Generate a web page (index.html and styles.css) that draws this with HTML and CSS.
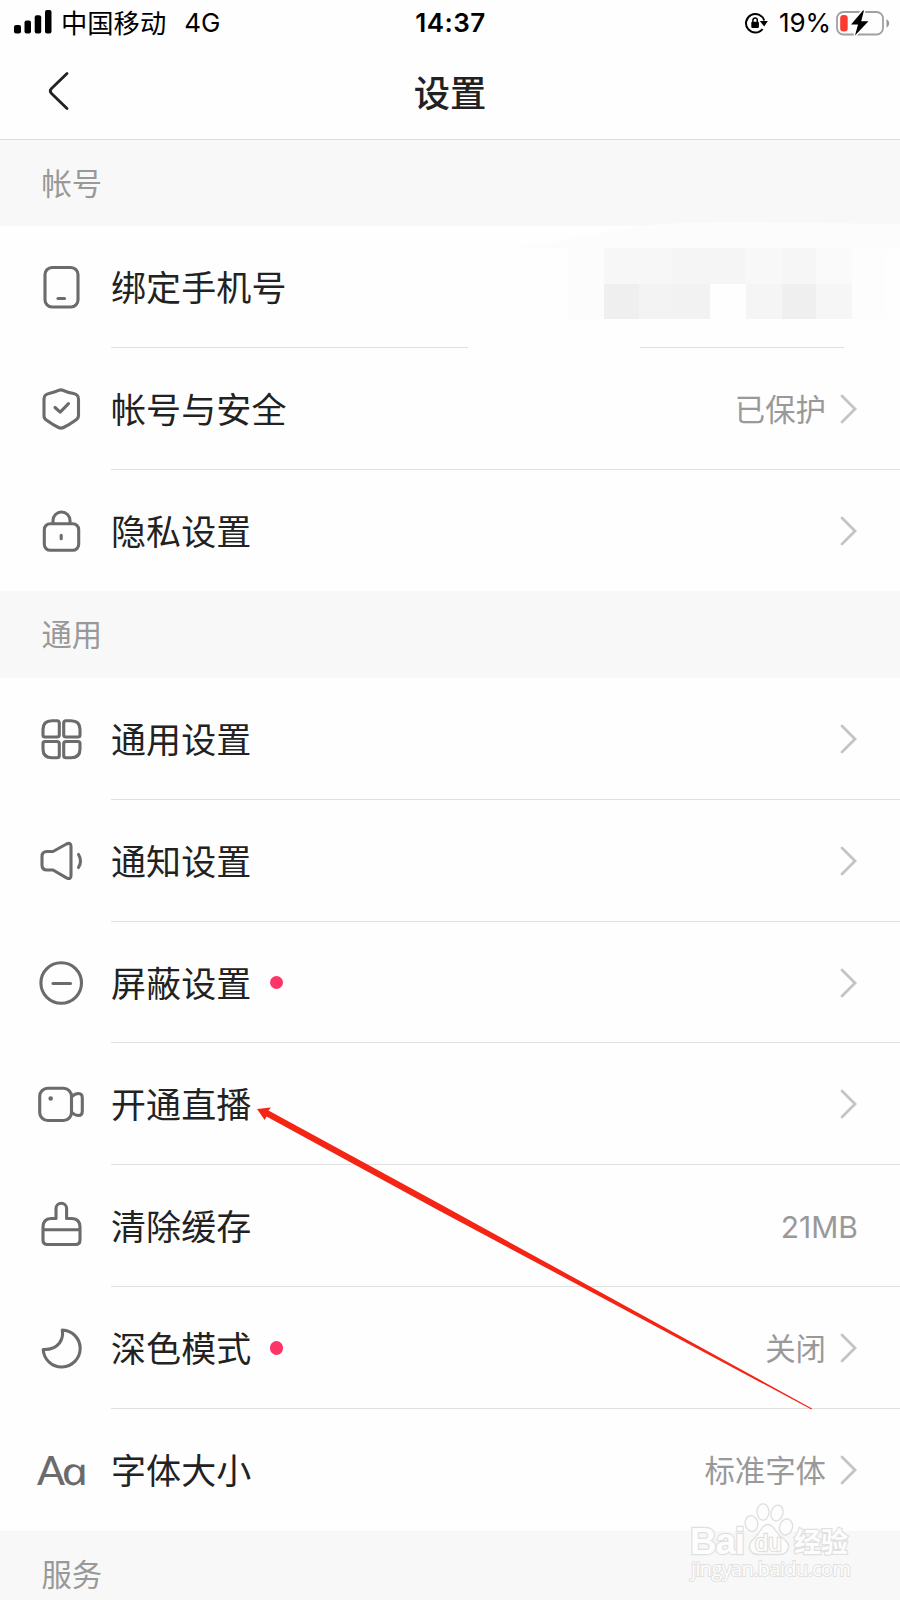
FILE: index.html
```html
<!DOCTYPE html>
<html lang="zh-CN">
<head>
<meta charset="utf-8">
<title>设置</title>
<link rel="stylesheet" href="styles.css">
</head>
<body>
<div class="screen">
  <header class="status">
    <div class="status-left">
      <svg class="signal" width="38" height="24" viewBox="0 0 38 24"><rect x="0" y="15" width="7" height="8.5" rx="2"/><rect x="10.5" y="10.5" width="6.5" height="13" rx="2"/><rect x="20.7" y="5.3" width="6.5" height="18.2" rx="2"/><rect x="31" y="0" width="6.5" height="23.5" rx="2"/></svg>
      <span class="carrier">中国移动</span>
      <span class="network">4G</span>
    </div>
    <span class="clock">14:37</span>
    <div class="status-right">
      <svg class="rotation" width="24" height="24" viewBox="0 0 24 24"><path d="M18.600 18A9.300 9.300 0 1 1 20.200 9.500" fill="none" stroke="#000" stroke-width="2"/><path d="M15.800 10H23.800L20.200 15.500Z"/><rect x="7.300" y="10.700" width="7.600" height="6.200" rx="1"/><path d="M8.900 11V9.200a2.200 2.200 0 0 1 4.400 0V11" fill="none" stroke="#000" stroke-width="1.500"/></svg>
      <span class="percent">19%</span>
      <svg class="battery" width="54" height="28" viewBox="0 0 54 28"><rect x="1" y="3" width="46" height="22.500" rx="6.500" fill="none" stroke="#a0a0a0" stroke-width="1.800"/><path d="M50.500 10.200c3.600 1.500 3.600 6.600 0 8.200Z" fill="#999"/><rect x="4.200" y="6" width="7.500" height="16.500" rx="3.300" fill="#fa3b30"/><path d="M27 1.500L15 15.500H22L19 26.500L32.500 12.300H25.200L28 1.500Z" stroke="#fff" stroke-width="3"/><path d="M27 1.500L15 15.500H22L19 26.500L32.500 12.300H25.200L28 1.500Z"/></svg>
    </div>
  </header>
  <nav class="nav">
    <svg class="back" width="24" height="42" viewBox="0 0 24 42"><path d="M20 3.500L4.500 18.500Q2 21 4.500 23.500L20 38.500" fill="none" stroke="#222" stroke-width="2.800" stroke-linecap="round"/></svg>
    <h1 class="title">设置</h1>
  </nav>
  <main>
    <h2 class="section">帐号</h2>
    <div class="row">
      <svg class="icon" viewBox="0 0 60 60"><rect x="14" y="10.500" width="33" height="39.500" rx="7"/><path d="M27 41.500H33.500"/></svg>
      <div class="cell first"><span class="label">绑定手机号</span></div>
    </div>
    <div class="row">
      <svg class="icon" viewBox="0 0 60 60"><path d="M28.300 11.200Q30 10.500 31.700 11.200Q37 13.500 42.500 14.500Q47.500 15.500 47.500 20V36.500Q47.500 39.500 44.500 41.200Q38.500 45.500 32.500 48.500Q30 49.700 27.500 48.500Q21.500 45.500 16 41.500Q13 39.800 13 37V20Q13 15.500 18 14.500Q23.500 13.300 28.300 11.200Z"/><path d="M24 28.500L29.200 33.200L37.500 24.700"/></svg>
      <div class="cell"><span class="label">帐号与安全</span><span class="value">已保护</span><svg class="chevron" viewBox="0 0 18 32"><path d="M2 3L15 16L2 29"/></svg></div>
    </div>
    <div class="row">
      <svg class="icon" viewBox="0 0 60 60"><rect x="13.300" y="22.700" width="34.400" height="26.600" rx="6"/><path d="M22 22.500V19.500a8.500 8.500 0 0 1 17 0v3M30.200 34.200V37.700"/></svg>
      <div class="cell last"><span class="label">隐私设置</span><svg class="chevron" viewBox="0 0 18 32"><path d="M2 3L15 16L2 29"/></svg></div>
    </div>
    <h2 class="section">通用</h2>
    <div class="row">
      <svg class="icon" viewBox="0 0 60 60"><path d="M21 11.700H26Q28.300 11.700 28.300 14V26Q28.300 28 26 28H14Q12 28 12 26V20.500Q12 11.700 21 11.700ZM40 11.700H35Q32.700 11.700 32.700 14V26Q32.700 28 35 28H47Q49 28 49 26V20.500Q49 11.700 40 11.700ZM21 48.800H26Q28.300 48.800 28.300 46.500V34.500Q28.300 32.500 26 32.500H14Q12 32.500 12 34.500V40Q12 48.800 21 48.800ZM40 48.800H35Q32.700 48.800 32.700 46.500V34.500Q32.700 32.500 35 32.500H47Q49 32.500 49 34.500V40Q49 48.800 40 48.800Z"/></svg>
      <div class="cell"><span class="label">通用设置</span><svg class="chevron" viewBox="0 0 18 32"><path d="M2 3L15 16L2 29"/></svg></div>
    </div>
    <div class="row">
      <svg class="icon" viewBox="0 0 60 60"><path d="M22 20.500L35.500 13Q40 11 40 15.500V44.500Q40 49 35.500 46.800L22 39H16Q11 39 11 34V25.500Q11 20.500 16 20.500ZM47.500 23.500Q51.500 30 47.500 36.500"/></svg>
      <div class="cell"><span class="label">通知设置</span><svg class="chevron" viewBox="0 0 18 32"><path d="M2 3L15 16L2 29"/></svg></div>
    </div>
    <div class="row">
      <svg class="icon" viewBox="0 0 60 60"><circle cx="30.200" cy="30" r="20.300"/><path d="M22 30.500H39.500"/></svg>
      <div class="cell"><span class="label">屏蔽设置</span><i class="dot"></i><svg class="chevron" viewBox="0 0 18 32"><path d="M2 3L15 16L2 29"/></svg></div>
    </div>
    <div class="row">
      <svg class="icon" viewBox="0 0 60 60"><rect x="8.700" y="14.200" width="31.800" height="32.300" rx="8"/><path d="M41 22.500Q44 19.500 47.500 19.500Q51.300 19.500 51.300 24V37Q51.300 41.500 47.500 41.500Q44 41.500 41 38.500"/><circle class="solid" cx="19.700" cy="24.500" r="2.300"/></svg>
      <div class="cell"><span class="label">开通直播</span><svg class="chevron" viewBox="0 0 18 32"><path d="M2 3L15 16L2 29"/></svg></div>
    </div>
    <div class="row">
      <svg class="icon" viewBox="0 0 60 60"><path d="M25 22.500V12.500a5.300 5.300 0 0 1 10.600 0V22.500H41Q49 23 49 31V44Q49 48.500 44.500 48.500H16.500Q12 48.500 12 44V31Q12 23 20 22.500H25M12 33.700H49"/></svg>
      <div class="cell"><span class="label">清除缓存</span><span class="value size">21MB</span></div>
    </div>
    <div class="row">
      <svg class="icon" viewBox="0 0 60 60"><path d="M31.300 12A18.500 18.500 0 1 1 12.200 31.500Q23 32 28.500 25Q32.500 19.500 31.300 12Z"/></svg>
      <div class="cell"><span class="label">深色模式</span><i class="dot"></i><span class="value">关闭</span><svg class="chevron" viewBox="0 0 18 32"><path d="M2 3L15 16L2 29"/></svg></div>
    </div>
    <div class="row">
      <svg class="icon" viewBox="0 0 60 60"><text class="glyph-cap" x="6" y="44.500">A</text><text class="glyph-low" transform="translate(33 44.500) scale(1.230 1) skewX(12)">a</text></svg>
      <div class="cell last"><span class="label">字体大小</span><span class="value">标准字体</span><svg class="chevron" viewBox="0 0 18 32"><path d="M2 3L15 16L2 29"/></svg></div>
    </div>
    <h2 class="section">服务</h2>
  </main>
  <svg class="overlay" width="900" height="1600" viewBox="0 0 900 1600">
    <path d="M510 248.500Q580 238 650 225Q680 222 740 222L900 224V248.500Z" fill="#fcfcfc"/>
    <path d="M468 344H640V350H468ZM844 344H900V350H844Z" fill="#fefefe"/>
    <g shape-rendering="crispEdges">
      <rect x="568" y="248" width="36" height="71" fill="#fcfcfc"/>
      <rect x="604" y="248" width="68" height="36" fill="#f7f7f7"/>
      <rect x="672" y="248" width="73" height="36" fill="#f5f5f5"/>
      <rect x="745" y="248" width="37" height="36" fill="#f8f8f8"/>
      <rect x="782" y="248" width="34" height="36" fill="#f6f6f6"/>
      <rect x="816" y="248" width="36" height="36" fill="#fafafa"/>
      <rect x="604" y="284" width="35" height="35" fill="#efefef"/>
      <rect x="639" y="284" width="33" height="35" fill="#f3f3f3"/>
      <rect x="672" y="284" width="38" height="35" fill="#f2f2f2"/>
      <rect x="710" y="284" width="36" height="35" fill="#fefefe"/>
      <rect x="746" y="284" width="36" height="35" fill="#f5f5f5"/>
      <rect x="782" y="284" width="34" height="35" fill="#efefef"/>
      <rect x="816" y="284" width="36" height="35" fill="#f6f6f6"/>
      <rect x="852" y="248" width="34" height="71" fill="#fdfdfd"/>
    </g>
    <path d="M257 1109L271 1107.500L268.500 1110.500L440 1204L812 1408.500L811.500 1409.500L437 1209.500L266.500 1116.500L264.700 1120Z" fill="#f42515"/>
    <g class="watermark">
      <text class="wm-bai" x="690" y="1554" textLength="55">Bai</text>
      <ellipse cx="751.500" cy="1523.500" rx="6.300" ry="8" transform="rotate(-10 751.500 1523.500)"/>
      <ellipse cx="763" cy="1512" rx="6" ry="8.300"/>
      <ellipse cx="777" cy="1513" rx="6" ry="8" transform="rotate(15 777 1513)"/>
      <ellipse cx="786" cy="1527" rx="6.500" ry="8" transform="rotate(15 786 1527)"/>
      <path d="M768 1524.500Q772 1524.500 776 1531Q779 1536 785 1540Q790 1544 788 1549Q786 1555 778 1554.500H760Q751 1555 749.500 1548Q749 1543 754 1538.500Q758 1535 761 1529.500Q764 1524.500 768 1524.500Z"/>
      <text class="wm-du" x="755" y="1550.500">du</text>
      <text class="wm-cn" x="794" y="1551.500">经验</text>
      <text class="wm-url" x="691" y="1575.500" textLength="160">jingyan.baidu.com</text>
    </g>
  </svg>
</div>
</body>
</html>
```
FILE: styles.css
```css
* { box-sizing: border-box; }
body {
  margin: 0;
  background: #fefefe;
  color: #222;
  font-family: Inter, "Noto Sans CJK SC", sans-serif;
}
.screen {
  position: relative;
  width: 900px;
  height: 1600px;
  overflow: hidden;
}
.status {
  display: grid;
  grid-template-columns: 1fr 80px 1fr;
  align-items: center;
  height: 46px;
  padding: 0 10px 0 14px;
  color: #000;
  font-size: 26px;
  line-height: 46px;
}
.status-left, .status-right { display: flex; align-items: center; }
.status-right { justify-content: flex-end; }
.signal { margin-top: -3px; }
.carrier {
  height: 46px;
  margin: -2px 0 0 9px;
  font-family: "Noto Sans CJK SC", sans-serif;
  font-size: 26.3px;
  line-height: 46px;
}
.network { margin-left: 18px; }
.clock {
  margin-left: -3px;
  text-align: center;
  font-weight: 600;
  letter-spacing: 0.5px;
  white-space: nowrap;
}
.percent { margin: 0 5px 0 11px; letter-spacing: -0.1px; }
.battery { margin-top: -1px; }
.nav {
  display: grid;
  grid-template-columns: 100px 1fr 100px;
  align-items: center;
  height: 94px;
  padding-bottom: 4px;
  border-bottom: 1px solid #dcdcdc;
}
.back { margin-left: 47px; }
.title {
  margin: 0;
  text-align: center;
  font: 500 36.3px/50px "Noto Sans CJK SC", sans-serif;
}
.section {
  height: 86.6px;
  margin: 0;
  padding-left: 41.5px;
  background: #f8f8f8;
  color: #999;
  font: 400 30.3px/85px "Noto Sans CJK SC", sans-serif;
}
.section:first-child { height: 86px; line-height: 84px; }
.row {
  display: flex;
  align-items: center;
  height: 121.82px;
  padding-left: 31px;
}
.icon {
  flex: none;
  width: 60px;
  height: 60px;
  margin-right: 20px;
  fill: none;
  stroke: #6b6b6b;
  stroke-width: 3.1;
  stroke-linecap: round;
  stroke-linejoin: round;
}
.icon .solid, .icon text { fill: #6b6b6b; stroke: none; }
.glyph-cap { font: 500 41px Lato, sans-serif; }
.glyph-low { font: italic 400 38px "Noto Sans", sans-serif; }
.cell {
  display: flex;
  flex: 1;
  align-items: center;
  height: 100%;
  padding-right: 42px;
  border-bottom: 1px solid #e0e0e0;
}
.cell.last { border-bottom-color: transparent; }
.label {
  padding-bottom: 0.8px;
  font: 400 35px/50px "Noto Sans CJK SC", sans-serif;
  letter-spacing: 0.1px;
}
.dot {
  width: 13.5px;
  height: 13.5px;
  margin: 1px 0 0 18.5px;
  border-radius: 50%;
  background: #fc3468;
}
.value {
  margin-left: auto;
  padding-bottom: 1px;
  color: #999;
  font: 400 30.4px/44px "Noto Sans CJK SC", sans-serif;
}
.value.size {
  padding: 2px 0 0;
  font: 400 30px/44px Inter, sans-serif;
}
.chevron {
  flex: none;
  width: 18px;
  height: 32px;
  margin: 1px 0 0 14px;
  fill: none;
  stroke: #c4c4c4;
  stroke-width: 2.8;
  stroke-linecap: round;
}
.label + .chevron, .dot + .chevron { margin-left: auto; }
.overlay {
  position: absolute;
  top: 0;
  left: 0;
}
.watermark {
  fill: #fdfdfd;
  stroke: #e0e0e0;
  stroke-width: 1.4;
}
.watermark text { paint-order: stroke; stroke-width: 2.4; }
.watermark .wm-url { stroke-width: 1.8; }
.wm-bai { font: 700 37px "Liberation Sans", sans-serif; }
.wm-du { font: 400 24px "Liberation Sans", sans-serif; }
.wm-cn { font: 700 27px "Noto Sans CJK SC", sans-serif; }
.wm-url { font: 400 20px "Open Sans", sans-serif; }
```
